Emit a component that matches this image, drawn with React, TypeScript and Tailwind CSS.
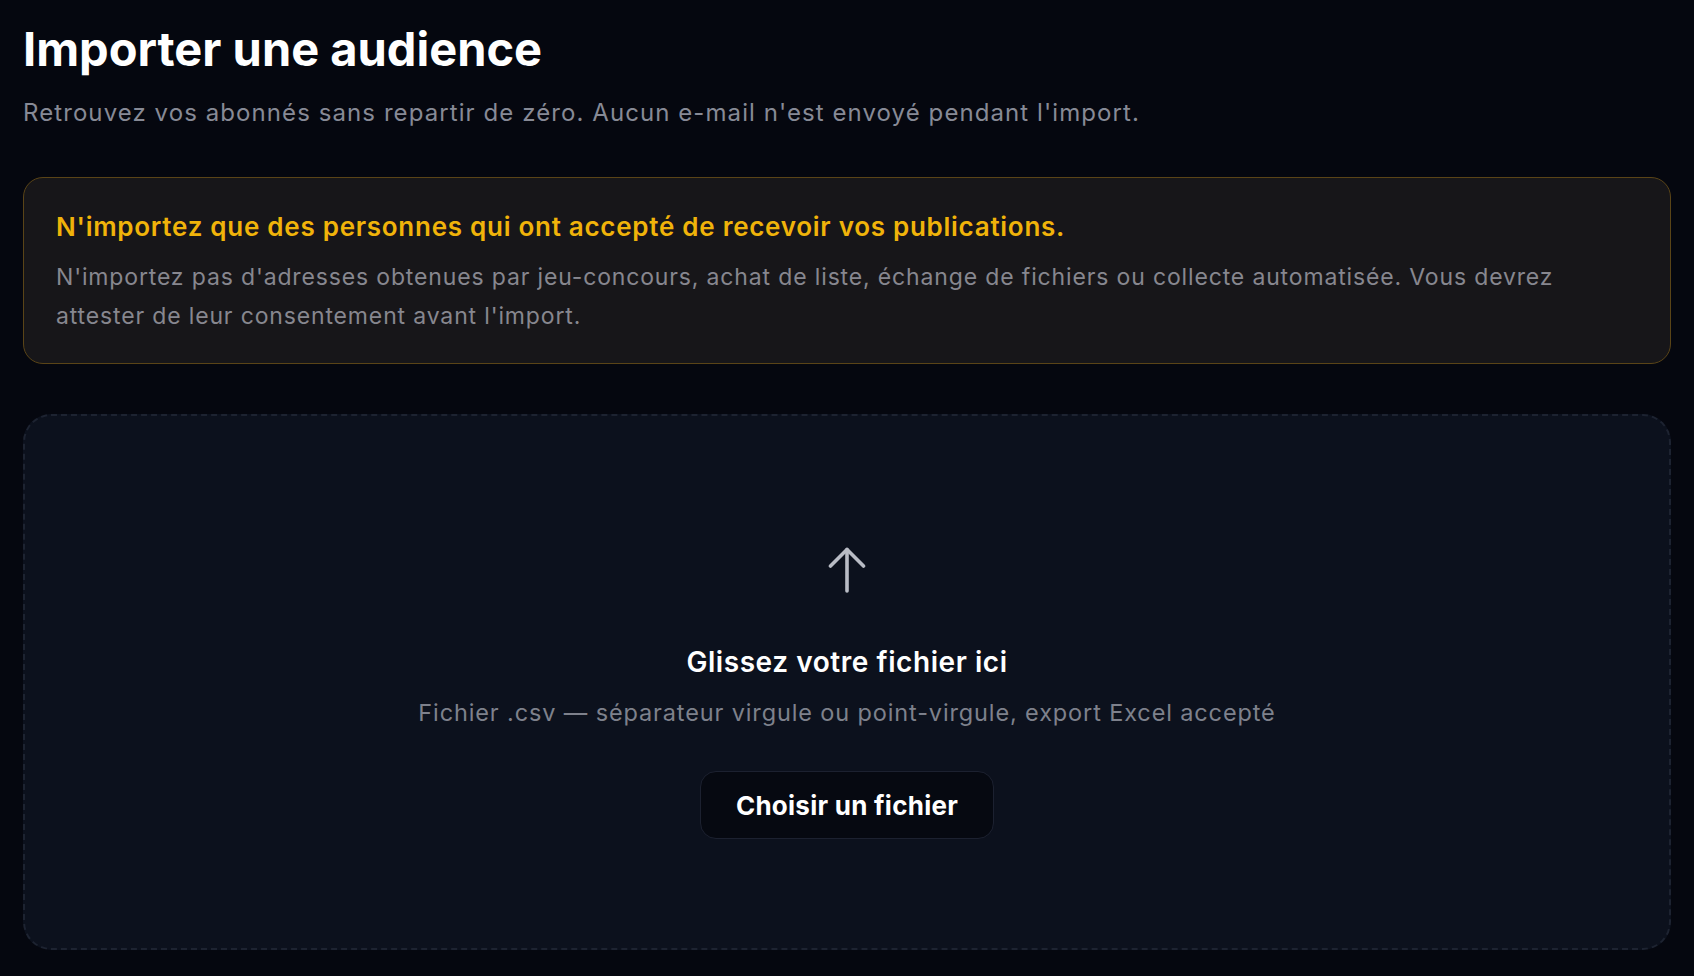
import { useRef } from "react";

function UploadArrow() {
  return (
    <svg
      width="40"
      height="46"
      viewBox="0 0 40 46"
      fill="none"
      stroke="currentColor"
      strokeWidth="3.6"
      strokeLinecap="round"
      strokeLinejoin="round"
      className="text-[#b9bcc5]"
    >
      <path d="M20 44V2.5" />
      <path d="M3.5 19 20 2.5 36.5 19" />
    </svg>
  );
}

export default function App() {
  const fileInputRef = useRef<HTMLInputElement>(null);

  return (
    <div className="min-h-screen bg-[#05070f] px-[23px] pt-[21px] font-['Inter',sans-serif] antialiased">
      <h1 className="text-[47px] leading-[56px] font-bold text-white">
        Importer une audience
      </h1>
      <p className="mt-[19px] text-[24px] leading-[34px] tracking-[0.045em] text-[#878a96]">
        Retrouvez vos abonnés sans repartir de zéro. Aucun e-mail n'est envoyé
        pendant l'import.
      </p>

      <div className="mt-[47px] rounded-[20px] border border-[#5a4417] bg-[#171619] px-8 pt-[34px] pb-[27px]">
        <p className="text-[26px] leading-[30px] font-semibold tracking-[0.028em] text-[#f0b30a]">
          N'importez que des personnes qui ont accepté de recevoir vos
          publications.
        </p>
        <p className="mt-[16px] text-[23px] leading-[39px] tracking-[0.037em] text-[#87878f]">
          N'importez pas d'adresses obtenues par jeu-concours, achat de liste,
          échange de fichiers ou collecte automatisée. Vous devrez attester de
          leur consentement avant l'import.
        </p>
      </div>

      <div
        className="mt-[50px] flex h-[536px] cursor-pointer flex-col items-center rounded-[28px] border-2 border-dashed border-[#1d2331] bg-[#0c111d] pt-[131px] text-center"
        onClick={() => fileInputRef.current?.click()}
      >
        <input ref={fileInputRef} type="file" accept=".csv" className="hidden" />
        <UploadArrow />
        <p className="mt-[51px] text-[28px] leading-[36px] font-semibold tracking-[0.02em] text-white">
          Glissez votre fichier ici
        </p>
        <p className="mt-[17px] text-[23.5px] leading-[32px] tracking-[0.037em] text-[#7e818c]">
          Fichier .csv — séparateur virgule ou point-virgule, export Excel
          accepté
        </p>
        <button
          className="mt-[42px] h-[68px] rounded-[16px] border border-[#1c2130] bg-[#060911] px-[35px] text-[26px] font-bold tracking-[0.01em] text-white"
          onClick={(e) => {
            e.stopPropagation();
            fileInputRef.current?.click();
          }}
        >
          Choisir un fichier
        </button>
      </div>
    </div>
  );
}
